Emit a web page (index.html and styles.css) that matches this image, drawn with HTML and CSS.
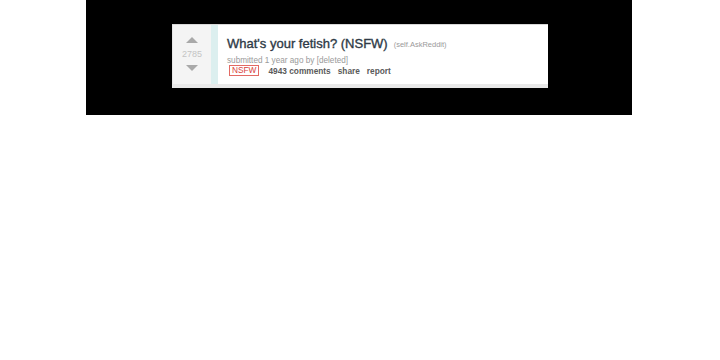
FILE: index.html
```html
<!DOCTYPE html>
<html>
<head>
<meta charset="utf-8">
<link rel="stylesheet" href="styles.css">
</head>
<body>
<div class="stage">
  <div class="card">
    <div class="vote">
      <span class="arrow up"></span>
      <span class="score">2785</span>
      <span class="arrow down"></span>
    </div>
    <div class="stripe"></div>
    <div class="entry">
      <p class="title"><span class="title-text">What's your fetish? (NSFW)</span><span class="domain">(self.AskReddit)</span></p>
      <p class="tagline">submitted 1 year ago by [deleted]</p>
      <ul class="buttons">
        <li class="nsfw">NSFW</li>
        <li>4943 comments</li>
        <li>share</li>
        <li>report</li>
      </ul>
    </div>
  </div>
</div>
</body>
</html>
```

FILE: styles.css
```css
html, body {
  margin: 0;
  padding: 0;
  background: #fff;
  font-family: "Liberation Sans", Arial, sans-serif;
}
.stage {
  margin-left: 86px;
  width: 546px;
  height: 115px;
  background: #000;
  box-sizing: border-box;
  padding: 24px 0 0 86px;
}
.card {
  width: 376px;
  height: 64px;
  display: flex;
  background: #fff;
  border-top: 1px solid #d8d8d8;
  border-bottom: 4px solid #e9e9e9;
  box-sizing: border-box;
}
.vote {
  width: 39px;
  background: #f4f4f4;
  border-left: 1px solid #e6e6e6;
  box-sizing: border-box;
  display: flex;
  flex-direction: column;
  align-items: center;
  padding-top: 12px;
}
.arrow {
  width: 0;
  height: 0;
  border-left: 6px solid transparent;
  border-right: 6px solid transparent;
}
.arrow.up {
  border-bottom: 6px solid #a9a9a9;
}
.arrow.down {
  border-top: 6px solid #a9a9a9;
}
.score {
  font-size: 9px;
  color: #c4c4c4;
  line-height: 11px;
  margin: 6px 0 5px;
}
.stripe {
  width: 7px;
  background: #dcefef;
}
.entry {
  flex: 1;
  padding: 9px 0 0 9px;
}
.title {
  margin: 0;
  line-height: 17px;
  white-space: nowrap;
}
.title-text {
  font-size: 13px;
  color: #2e3a46;
  font-weight: normal;
  -webkit-text-stroke: 0.35px #2e3a46;
}
.domain {
  font-size: 7.5px;
  color: #9a9a9a;
  margin-left: 6px;
  vertical-align: 1px;
}
.tagline {
  margin: 3px 0 0;
  font-size: 8.2px;
  line-height: 10px;
  color: #9a9a9a;
}
.buttons {
  list-style: none;
  margin: -1px 0 0;
  padding: 0 0 0 2px;
  display: flex;
  align-items: center;
  gap: 7px;
  font-size: 8.3px;
  font-weight: bold;
  color: #5a5a5a;
  line-height: 10px;
}
.buttons .nsfw {
  color: #d9413a;
  font-weight: normal;
  border: 1px solid #e36a64;
  padding: 0 2px;
  margin-right: 2px;
  line-height: 9px;
}
```
